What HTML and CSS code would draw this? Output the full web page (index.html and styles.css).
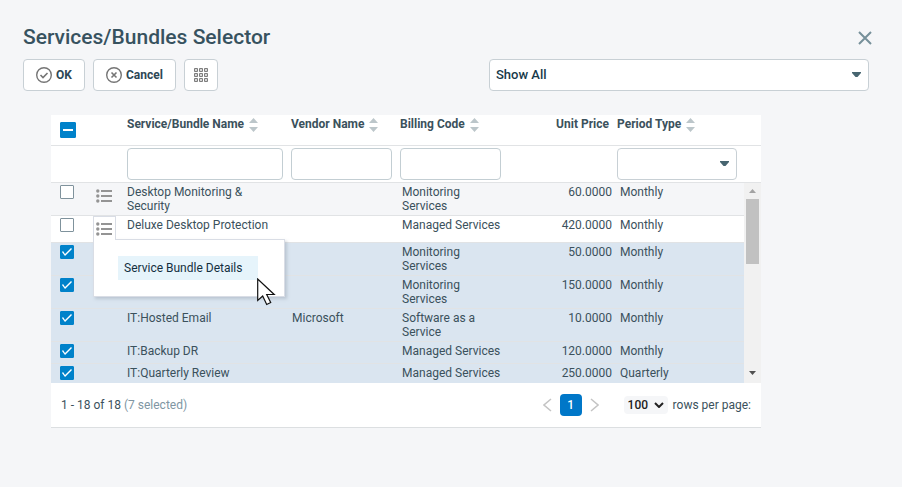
FILE: index.html
```html
<!DOCTYPE html>
<html lang="en">
<head>
	<meta charset="utf-8">
	<title>Services/Bundles Selector</title>
	<link rel="stylesheet" href="styles.css">
</head>
<body>
	<svg class="sprite" aria-hidden="true">
		<symbol id="sort" viewBox="0 0 9 14">
			<path d="M4.500 0L9 5H0zM0 9h9l-4.500 5z" fill="#bcc6ca"/>
		</symbol>
		<symbol id="arrow" viewBox="0 0 9 5">
			<path d="M0 0h9v1L5.500 5h-2L0 1z" fill="#476570"/>
		</symbol>
		<symbol id="list" viewBox="0 0 16 14">
			<path d="M5 2h11M5 7h11M5 12h11" stroke="#949494" stroke-width="2"/>
			<circle cx="1.800" cy="2" r="1.700" fill="#949494"/>
			<circle cx="1.800" cy="7" r="1.700" fill="#949494"/>
			<circle cx="1.800" cy="12" r="1.700" fill="#949494"/>
		</symbol>
	</svg>

	<header class="top">
		<h1>Services/Bundles Selector</h1>
		<button class="close" type="button" aria-label="Close">
			<svg width="14" height="14" viewBox="0 0 14 14"><path d="M1 1l12 12M13 1L1 13" stroke="#76909a" stroke-width="2" fill="none"/></svg>
		</button>
	</header>

	<div class="toolbar">
		<button class="btn" type="button">
			<svg width="16" height="16" viewBox="0 0 16 16" fill="none" stroke="#757575"><circle cx="8" cy="8" r="7.300" stroke-width="1.400"/><path d="M4.500 8l2.500 2.500L11.500 6" stroke-width="1.600"/></svg>
			OK
		</button>
		<button class="btn" type="button">
			<svg width="16" height="16" viewBox="0 0 16 16" fill="none" stroke="#757575"><circle cx="8" cy="8" r="7.300" stroke-width="1.400"/><path d="M5.500 5.500l5 5M10.500 5.500l-5 5" stroke-width="1.600"/></svg>
			Cancel
		</button>
		<button class="btn btn-grid" type="button" aria-label="Columns">
			<svg width="14" height="14" viewBox="0 0 14 14" fill="#d6d6d6" stroke="#7d7d7d">
				<path d="M.5.5h3v3h-3zM5.500.5h3v3h-3zM10.500.5h3v3h-3zM.5 5.500h3v3h-3zM5.500 5.500h3v3h-3zM10.500 5.500h3v3h-3zM.5 10.500h3v3h-3zM5.500 10.500h3v3h-3zM10.500 10.500h3v3h-3z"/>
			</svg>
		</button>
		<div class="select show">
			<select aria-label="Show"><option>Show All</option></select>
			<svg width="9" height="5"><use href="#arrow"/></svg>
		</div>
	</div>

	<main class="panel">
		<table class="head">
			<colgroup><col class="c-check"><col class="c-menu"><col class="c-name"><col class="c-vendor"><col class="c-code"><col class="c-price"><col></colgroup>
			<tr class="titles">
				<th><input class="check check-some" type="checkbox" aria-label="Select all"></th>
				<th></th>
				<th>Service/Bundle Name <svg width="9" height="14"><use href="#sort"/></svg></th>
				<th>Vendor Name <svg width="9" height="14"><use href="#sort"/></svg></th>
				<th>Billing Code <svg width="9" height="14"><use href="#sort"/></svg></th>
				<th class="price">Unit Price</th>
				<th>Period Type <svg width="9" height="14"><use href="#sort"/></svg></th>
			</tr>
			<tr class="filters">
				<td></td>
				<td></td>
				<td><input type="text" aria-label="Filter by name"></td>
				<td><input type="text" aria-label="Filter by vendor"></td>
				<td><input type="text" aria-label="Filter by billing code"></td>
				<td></td>
				<td>
					<div class="select period">
						<select aria-label="Filter by period type"><option></option></select>
						<svg width="9" height="5"><use href="#arrow"/></svg>
					</div>
				</td>
			</tr>
		</table>

		<div class="scroll">
			<table class="rows">
				<colgroup><col class="c-check"><col class="c-menu"><col class="c-name"><col class="c-vendor"><col class="c-code"><col class="c-price"><col></colgroup>
				<tr class="odd">
					<td><input class="check" type="checkbox" aria-label="Select row"></td>
					<td><button class="menu-btn" type="button" aria-label="Row menu"><svg width="16" height="14"><use href="#list"/></svg></button></td>
					<td>Desktop Monitoring &amp; Security</td>
					<td></td>
					<td>Monitoring Services</td>
					<td class="price">60.0000</td>
					<td>Monthly</td>
				</tr>
				<tr>
					<td><input class="check" type="checkbox" aria-label="Select row"></td>
					<td class="menu-cell">
						<button class="menu-btn open" type="button" aria-label="Row menu"><svg width="16" height="14"><use href="#list"/></svg></button>
						<div class="menu">
							<a href="#">Service Bundle Details</a>
							<svg class="pointer" width="19" height="28" viewBox="0 0 19 28"><path d="M.7 1v21.500l5-4.500 4 8.500 4-2-4-8h7.500z" fill="#fff" stroke="#111" stroke-width="1.200"/></svg>
						</div>
					</td>
					<td>Deluxe Desktop Protection</td>
					<td></td>
					<td>Managed Services</td>
					<td class="price">420.0000</td>
					<td>Monthly</td>
				</tr>
				<tr class="selected">
					<td><input class="check" type="checkbox" aria-label="Select row" checked></td>
					<td></td>
					<td></td>
					<td></td>
					<td>Monitoring Services</td>
					<td class="price">50.0000</td>
					<td>Monthly</td>
				</tr>
				<tr class="selected">
					<td><input class="check" type="checkbox" aria-label="Select row" checked></td>
					<td></td>
					<td></td>
					<td></td>
					<td>Monitoring Services</td>
					<td class="price">150.0000</td>
					<td>Monthly</td>
				</tr>
				<tr class="selected">
					<td><input class="check" type="checkbox" aria-label="Select row" checked></td>
					<td></td>
					<td>IT:Hosted Email</td>
					<td>Microsoft</td>
					<td>Software as a Service</td>
					<td class="price">10.0000</td>
					<td>Monthly</td>
				</tr>
				<tr class="selected">
					<td><input class="check" type="checkbox" aria-label="Select row" checked></td>
					<td></td>
					<td>IT:Backup DR</td>
					<td></td>
					<td>Managed Services</td>
					<td class="price">120.0000</td>
					<td>Monthly</td>
				</tr>
				<tr class="selected">
					<td><input class="check" type="checkbox" aria-label="Select row" checked></td>
					<td></td>
					<td>IT:Quarterly Review</td>
					<td></td>
					<td>Managed Services</td>
					<td class="price">250.0000</td>
					<td>Quarterly</td>
				</tr>
			</table>
			<div class="bar" aria-hidden="true">
				<svg width="17" height="16" viewBox="0 0 17 16"><path d="M5 10l3.500-4L12 10z" fill="#a3a3a3"/></svg>
				<div class="thumb"></div>
				<svg width="17" height="17" viewBox="0 0 17 17"><path d="M5 5l3.500 4L12 5z" fill="#505050"/></svg>
			</div>
		</div>

		<footer class="pager">
			<span>1 - 18 of 18 <span class="count">(7 selected)</span></span>
			<nav class="pages">
				<button type="button" aria-label="Previous page"><svg width="9" height="14" viewBox="0 0 9 14"><path d="M8 1L1 7l7 6" fill="none" stroke="#c4c4c4" stroke-width="1.500"/></svg></button>
				<button class="current" type="button">1</button>
				<button type="button" aria-label="Next page"><svg width="9" height="14" viewBox="0 0 9 14"><path d="M1 1l7 6-7 6" fill="none" stroke="#c4c4c4" stroke-width="1.500"/></svg></button>
			</nav>
			<div class="select size">
				<select id="size"><option>100</option></select>
				<svg width="10" height="6" viewBox="0 0 10 6"><path d="M1 1l4 4 4-4" fill="none" stroke="#222" stroke-width="2"/></svg>
			</div>
			<label for="size">rows per page:</label>
		</footer>
	</main>
</body>
</html>
```

FILE: styles.css
```css
* {
	box-sizing: border-box;
}

body {
	margin: 0;
	padding: 24px 33px 0 23px;
	background: #f5f6f8;
	color: #3b515c;
	font-family: Roboto, "Liberation Sans", sans-serif;
	font-size: 12px;
	line-height: 14px;
}

button, input, select {
	margin: 0;
	font: inherit;
	color: inherit;
}

button {
	padding: 0;
	border: 0;
	background: none;
}

svg {
	display: block;
	flex: none;
}

.sprite {
	position: absolute;
	width: 0;
	height: 0;
}

.top {
	display: flex;
	align-items: center;
	justify-content: space-between;
}

h1 {
	margin: 0;
	font-size: 21px;
	line-height: 27px;
	font-weight: 500;
	color: #37525f;
}

.close {
	margin-right: -3px;
}

.toolbar {
	display: flex;
	gap: 8px;
	margin-top: 8px;
}

.btn {
	display: flex;
	align-items: center;
	gap: 4px;
	height: 32px;
	padding: 0 12px;
	border: 1px solid #c8d0d5;
	border-radius: 4px;
	background: #fff;
	font-weight: 700;
	color: #2d4755;
}

.btn-grid {
	padding: 0 9px;
}

.select {
	position: relative;
}

.select select {
	width: 100%;
	height: 32px;
	padding: 0 6px;
	border: 1px solid #c8d0d5;
	border-radius: 4px;
	background: #fff;
	appearance: none;
}

.select svg {
	position: absolute;
	top: 13px;
	right: 8px;
	pointer-events: none;
}

.show {
	width: 380px;
	margin-left: auto;
}

.show select {
	font-size: 13px;
	font-weight: 500;
	color: #17394a;
}

/* table panel */

.panel {
	margin: 24px 108px 0 28px;
	background: #fff;
	border-bottom: 1px solid #dcdfe1;
}

table {
	width: 100%;
	border-collapse: separate;
	border-spacing: 0;
	table-layout: fixed;
}

th, td {
	padding: 2px 4px;
	text-align: left;
	vertical-align: top;
	border-bottom: 1px solid #e1e3e5;
}

.c-check { width: 41px; }
.c-menu { width: 31px; }
.c-name { width: 164px; }
.c-vendor { width: 109px; }
.c-code { width: 109px; }
.c-price { width: 108px; }

th:first-child, td:first-child {
	padding-left: 9px;
}

.titles th {
	height: 31px;
	white-space: nowrap;
	font-weight: 700;
}

.titles svg {
	display: inline-block;
	margin-left: 2px;
	vertical-align: middle;
}

.titles .check {
	width: 16px;
	height: 16px;
	margin-top: 5px;
}

.head .price, .rows .price {
	text-align: right;
}

.filters input {
	display: block;
	width: 100%;
	height: 32px;
	padding: 0 6px;
	border: 1px solid #c3ced3;
	border-radius: 4px;
}

.period {
	width: 120px;
}

.scroll {
	display: flex;
	max-height: 200px;
	overflow: hidden;
}

.rows {
	flex: 1;
	min-width: 0;
}

.rows td {
	height: 22px;
}

.rows td:nth-child(4) {
	padding-left: 5px;
}

.rows td:nth-child(5) {
	padding-left: 6px;
}

.rows td:nth-child(7) {
	padding-left: 7px;
}

.rows .price {
	padding-right: 1px;
}

.odd {
	background: #f5f6f8;
}

.selected {
	background: #dae5f0;
}

.check {
	display: block;
	width: 14px;
	height: 14px;
	border: 1px solid #7f929c;
	border-radius: 1px;
	background: #fff;
	appearance: none;
}

.check:checked, .check-some {
	border-color: #0082ca;
	background: #0082ca;
}

.check:checked::before {
	content: "";
	display: block;
	height: 12px;
	background: #fff;
	clip-path: polygon(1px 6px, 2px 5px, 4px 8px, 10px 2px, 11px 3px, 4px 10px);
}

.check-some::before {
	content: "";
	display: block;
	height: 2px;
	margin: 6px 2px;
	background: #fff;
}

/* row menu */

.rows td:nth-child(2) {
	padding: 0 1px;
}

.menu-btn {
	display: flex;
	align-items: center;
	width: 23px;
	height: 26px;
	padding-left: 3px;
}

.menu-cell {
	position: relative;
}

.menu-btn.open {
	position: relative;
	z-index: 2;
	height: 24px;
	margin-bottom: 2px;
	padding-left: 2px;
	border: 1px solid #d9dde5;
	border-bottom: 0;
	background: #fff;
}

.menu {
	position: absolute;
	z-index: 1;
	top: 23px;
	left: 1px;
	width: 192px;
	padding: 16px 24px;
	border: 1px solid #d9dde5;
	background: #fff;
	box-shadow: 2px 2px 3px #8d98a566;
}

.menu a {
	display: block;
	width: 140px;
	padding: 5px 6px;
	background: #e6f4fb;
	color: #14303f;
	text-decoration: none;
}

.pointer {
	position: absolute;
	top: 38px;
	left: 163px;
}

/* scrollbar */

.bar {
	display: flex;
	flex-direction: column;
	width: 17px;
	background: #f1f1f1;
}

.thumb {
	height: 65px;
	margin: 0 2px auto;
	background: #c1c1c1;
}

/* pager */

.pager {
	display: flex;
	align-items: center;
	height: 44px;
	padding: 0 10px;
}

.count {
	color: #8096a3;
}

.pages {
	display: flex;
	align-items: center;
	gap: 8px;
	margin-left: auto;
}

.current {
	width: 22px;
	height: 22px;
	border-radius: 4px;
	background: #0077c8;
	color: #fff;
	font-weight: 500;
}

.size {
	width: 44px;
	margin: 0 5px 0 25px;
}

.size select {
	display: block;
	height: 18px;
	padding: 0 4px;
	border: 0;
	background: #f5f6f8;
	font-weight: 500;
	color: #222;
}

.size svg {
	top: 6px;
	right: 4px;
}
```
